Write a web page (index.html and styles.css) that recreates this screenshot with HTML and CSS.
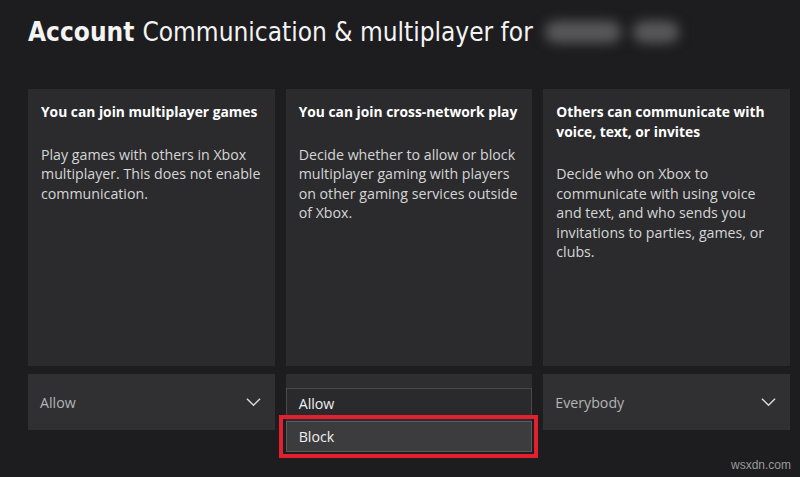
FILE: index.html
```html
<!DOCTYPE html>
<html lang="en">
<head>
  <meta charset="UTF-8" />
  <meta name="viewport" content="width=device-width, initial-scale=1.0"/>
  <title>Communication &amp; multiplayer</title>
  <link rel="stylesheet" href="styles.css">
</head>
<body>
  <header class="title">
    <span class="title-strong">Account</span>
    <span>Communication &amp; multiplayer for</span>
    <span class="blurred"><i></i><i class="short"></i></span>
  </header>

  <main class="settings">
    <section class="column">
      <div class="card">
        <h2>You can join multiplayer games</h2>
        <p>Play games with others in Xbox multiplayer. This does not enable communication.</p>
      </div>
      <div class="select">
        <span>Allow</span>
        <svg class="chevron" viewBox="0 0 16 10"><path d="M1 1.5 L8 8.5 L15 1.5" /></svg>
      </div>
    </section>

    <section class="column">
      <div class="card">
        <h2>You can join cross-network play</h2>
        <p>Decide whether to allow or block multiplayer gaming with players on other gaming services outside of Xbox.</p>
      </div>
      <div class="select open">
        <ul class="options">
          <li>Allow</li>
          <li class="selected">Block</li>
        </ul>
        <div class="highlight"></div>
      </div>
    </section>

    <section class="column">
      <div class="card">
        <h2>Others can communicate with voice, text, or invites</h2>
        <p>Decide who on Xbox to communicate with using voice and text, and who sends you invitations to parties, games, or clubs.</p>
      </div>
      <div class="select">
        <span>Everybody</span>
        <svg class="chevron" viewBox="0 0 16 10"><path d="M1 1.5 L8 8.5 L15 1.5" /></svg>
      </div>
    </section>
  </main>

  <div class="watermark">wsxdn.com</div>
</body>
</html>
```

FILE: styles.css
```css
html, body {
  height: 100%;
  margin: 0;
  padding: 0;
  overflow: hidden;
}

body {
  background-color: #1d1d1f;
  font-family: "Open Sans", "Noto Sans", sans-serif;
  color: #e6e6e6;
  position: relative;
}

.title {
  display: flex;
  align-items: center;
  gap: 8px;
  padding: 12px 0 0 28px;
  height: 40px;
  font-family: "DejaVu Sans Condensed", "DejaVu Sans", sans-serif;
  font-size: 26px;
  color: #f4f4f4;
}

.title-strong {
  font-weight: bold;
}

.blurred {
  display: flex;
  gap: 12px;
  filter: blur(6px);
  margin-left: 4px;
}

.blurred i {
  display: block;
  width: 76px;
  height: 22px;
  border-radius: 11px;
  background-color: #58585a;
}

.blurred i.short {
  width: 46px;
}

.settings {
  display: grid;
  grid-template-columns: repeat(3, 1fr);
  gap: 11px;
  padding: 37px 10px 0 28px;
}

.column {
  display: flex;
  flex-direction: column;
  gap: 8px;
}

.card {
  background-color: #2b2b2d;
  height: 277px;
  padding: 13px 12px 0 13px;
  box-sizing: border-box;
}

.card h2 {
  margin: 0 0 23px 0;
  font-size: 13.8px;
  font-weight: bold;
  line-height: 19.5px;
  color: #ffffff;
}

.card p {
  margin: 0;
  font-size: 14.2px;
  line-height: 19.5px;
  color: #d6d6d6;
}

.select {
  height: 56px;
  background-color: #303033;
  display: flex;
  align-items: center;
  justify-content: space-between;
  padding: 0 14px 0 12px;
  font-size: 14.2px;
  color: #b4b4b4;
  position: relative;
}

.chevron {
  width: 15px;
  height: 10px;
  fill: none;
  stroke: #d8d8d8;
  stroke-width: 1.6;
}

.select.open {
  background-color: #2e2e31;
}

.options {
  list-style: none;
  margin: 0;
  padding: 0;
  position: absolute;
  top: 14px;
  left: 0;
  right: 0;
  z-index: 2;
}

.options li {
  height: 29px;
  line-height: 29px;
  padding-left: 12px;
  font-size: 14.2px;
  color: #f0f0f0;
  background-color: #2a2a2d;
  border: 1px solid #4a4a4d;
}

.options li.selected {
  margin-top: 2px;
  background-color: #3c3c3f;
  border-color: #5a5a5e;
}

.highlight {
  position: absolute;
  top: 41px;
  left: -7px;
  right: -6px;
  height: 43px;
  border: 4px solid #e3202f;
  box-sizing: border-box;
  z-index: 3;
}

.watermark {
  position: absolute;
  right: 9px;
  bottom: 5px;
  font-family: "Liberation Sans", sans-serif;
  font-size: 12px;
  color: #9a9a9a;
}
```
